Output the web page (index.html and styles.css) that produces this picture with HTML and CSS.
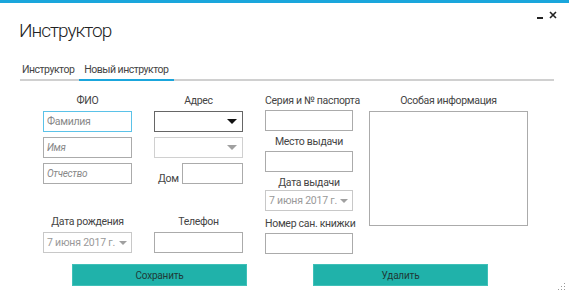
FILE: index.html
```html
<!DOCTYPE html>
<html>
<head>
    <title>Инструктор</title>
    <link rel="stylesheet" href="styles.css">
</head>
<body>
    <div class="window">
        <div class="topbar"></div>
        <div class="titlebar">
            <div class="title">Инструктор</div>
            <div class="controls">
                <svg width="7" height="8" viewBox="0 0 7 8"><rect x="0" y="6" width="6" height="2" fill="#222"/></svg>
                <svg width="8" height="8" viewBox="0 0 8 8"><path d="M1 1 L7 7 M7 1 L1 7" stroke="#222" stroke-width="1.6"/></svg>
            </div>
        </div>

        <div class="tabs">
            <div class="tab">Инструктор</div>
            <div class="tab active">Новый инструктор</div>
        </div>

        <div class="form">
            <div class="col col-fio">
                <div class="label">ФИО</div>
                <input type="text" class="field focused" placeholder="Фамилия">
                <input type="text" class="field hint" placeholder="Имя">
                <input type="text" class="field hint" placeholder="Отчество">
                <div class="label lbl-bottom">Дата рождения</div>
                <div class="date">7 июня 2017 г.<span class="arrow grey"></span></div>
            </div>

            <div class="col col-addr">
                <div class="label">Адрес</div>
                <div class="combo dark"><span class="arrow"></span></div>
                <div class="combo light"><span class="arrow grey"></span></div>
                <div class="house">
                    <span class="house-label">Дом</span>
                    <input type="text" class="field small">
                </div>
                <div class="label lbl-bottom">Телефон</div>
                <input type="text" class="field">
            </div>

            <div class="col col-pass">
                <div class="label">Серия и № паспорта</div>
                <input type="text" class="field">
                <div class="label lbl-place">Место выдачи</div>
                <input type="text" class="field">
                <div class="label lbl-issued">Дата выдачи</div>
                <div class="date">7 июня 2017 г.<span class="arrow grey"></span></div>
                <div class="label lbl-book">Номер сан. книжки</div>
                <input type="text" class="field">
            </div>

            <div class="col col-info">
                <div class="label">Особая информация</div>
                <textarea class="info"></textarea>
            </div>
        </div>

        <div class="buttons">
            <button class="btn">Сохранить</button>
            <button class="btn">Удалить</button>
        </div>

        <svg class="grip" width="9" height="9" viewBox="0 0 9 9">
            <rect x="7" y="1" width="1" height="1" fill="#999"/>
            <rect x="4" y="4" width="1" height="1" fill="#999"/>
            <rect x="7" y="4" width="1" height="1" fill="#999"/>
            <rect x="1" y="7" width="1" height="1" fill="#999"/>
            <rect x="4" y="7" width="1" height="1" fill="#999"/>
            <rect x="7" y="7" width="1" height="1" fill="#999"/>
        </svg>
    </div>
</body>
</html>
```

FILE: styles.css
```css
body {
    margin: 0;
    font-family: Roboto, "Liberation Sans", sans-serif;
    color: #333;
    background: #fff;
}
.window {
    position: relative;
    width: 569px;
    height: 293px;
    overflow: hidden;
}
.topbar {
    height: 3px;
    background-color: #1aa6dc;
}
.titlebar {
    display: flex;
    justify-content: space-between;
    padding: 0 12px 0 19px;
}
.title {
    margin-top: 16px;
    font-size: 19px;
    line-height: 24px;
    font-weight: 300;
    letter-spacing: -1px;
    color: #222;
}
.controls {
    display: flex;
    gap: 5px;
    margin-top: 8px;
    height: 8px;
}
.tabs {
    display: flex;
    margin: 20px 15px 0 20px;
    border-bottom: 2px solid #d0d0d0;
    font-size: 10.5px;
    letter-spacing: -0.5px;
    line-height: 14px;
}
.tab {
    padding: 0 6px 2px 5px;
    margin-bottom: -2px;
    border-bottom: 2px solid transparent;
    color: #444;
}
.tab:first-child {
    padding-left: 2px;
    padding-right: 5px;
}
.tab.active {
    border-bottom-color: #1aa6dc;
}
.form {
    display: flex;
    height: 170px;
    padding: 13px 0 0 43px;
}
.col {
    display: flex;
    flex-direction: column;
}
.col-fio, .col-addr {
    width: 89px;
    margin-right: 22px;
}
.col-pass {
    width: 88px;
    margin-right: 16px;
}
.col-info {
    width: 159px;
}
.label {
    font-size: 10.5px;
    letter-spacing: -0.3px;
    line-height: 14px;
    text-align: center;
    white-space: nowrap;
    margin-bottom: 3px;
    color: #444;
}
.field {
    box-sizing: border-box;
    width: 100%;
    height: 21px;
    margin: 0 0 5px 0;
    padding: 0 3px;
    border: 1px solid #ababab;
    font-family: inherit;
    font-size: 10.5px;
    letter-spacing: -0.3px;
    outline: none;
}
.field::placeholder {
    color: #888;
}
.field.hint::placeholder {
    font-style: italic;
    font-size: 10px;
}
.field.focused {
    border-color: #5bc2e8;
}
.lbl-bottom {
    margin-top: 26px;
}
.col-pass .label {
    margin-bottom: 2px;
}
.lbl-place {
    margin-top: -1px;
}
.lbl-issued {
    margin-top: -1px;
    margin-bottom: 0 !important;
}
.lbl-book {
    margin-top: 4px;
}
.col-pass .date {
    margin-bottom: 2px;
}
.combo {
    box-sizing: border-box;
    height: 21px;
    margin-bottom: 5px;
    display: flex;
    align-items: center;
    justify-content: flex-end;
    padding-right: 5px;
    border: 1px solid #666;
}
.combo.light {
    border-color: #d0d0d0;
}
.arrow {
    width: 0;
    height: 0;
    border-left: 5px solid transparent;
    border-right: 5px solid transparent;
    border-top: 5px solid #111;
}
.arrow.grey {
    border-top-color: #a0a0a0;
}
.date .arrow {
    border-left-width: 4px;
    border-right-width: 4px;
    border-top-width: 4px;
}
.house {
    display: flex;
    align-items: flex-end;
    height: 21px;
    margin-bottom: 5px;
}
.house-label {
    font-size: 10.5px;
    letter-spacing: -0.3px;
    line-height: 14px;
    color: #444;
    margin: 0 2px 0 4px;
    position: relative;
    top: 2px;
}
.field.small {
    width: 61px;
    margin: 0 0 0 auto;
}
.date {
    box-sizing: border-box;
    height: 21px;
    display: flex;
    align-items: center;
    justify-content: space-between;
    padding: 0 4px 0 3px;
    border: 1px solid #c8c8c8;
    font-size: 10.5px;
    letter-spacing: -0.2px;
    color: #999;
    white-space: nowrap;
}
.info {
    box-sizing: border-box;
    width: 159px;
    height: 115px;
    border: 1px solid #ababab;
    resize: none;
    outline: none;
}
.buttons {
    display: flex;
    gap: 66px;
    padding: 0 0 0 72px;
}
.btn {
    width: 175px;
    height: 22px;
    background-color: #20b2aa;
    border: 1px solid #3fc0b8;
    color: #1f3a38;
    font-family: inherit;
    font-size: 10px;
    letter-spacing: -0.2px;
    padding: 0;
}
.grip {
    position: absolute;
    right: 3px;
    bottom: 2px;
}
```
